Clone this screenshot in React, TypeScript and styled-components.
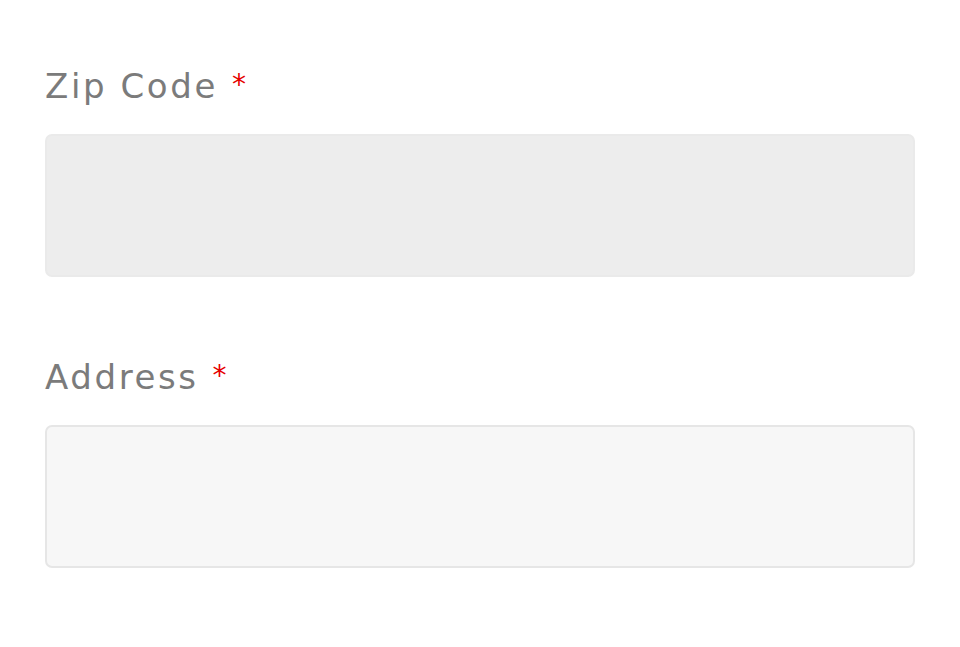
import React from 'react';
import styled, { createGlobalStyle } from 'styled-components';

const GlobalStyle = createGlobalStyle`
  html, body {
    margin: 0;
    padding: 0;
    background: #ffffff;
  }
  body {
    font-family: 'DejaVu Sans', 'Liberation Sans', sans-serif;
  }
`;

const Form = styled.form`
  display: flex;
  flex-direction: column;
  gap: 80px;
  padding: 66px 45px 0 45px;
`;

const Field = styled.div`
  display: flex;
  flex-direction: column;
  gap: 28px;
`;

const Label = styled.label`
  display: block;
  font-family: 'DejaVu Sans', 'Liberation Sans', sans-serif;
  font-size: 34px;
  line-height: 40px;
  font-weight: 400;
  color: #7b7b7b;
  letter-spacing: 2.6px;
`;

// asterisk sits a little above the baseline
const Required = styled.span`
  position: relative;
  top: -4px;
  color: #e60000;
  font-size: 28px;
  line-height: 0;
  margin-left: 14px;
  letter-spacing: 0;
`;

const Input = styled.input<{ $filled?: boolean }>`
  display: block;
  box-sizing: border-box;
  width: 100%;
  height: 143px;
  margin: 0;
  border-radius: 7px;
  border: 2px solid ${(p) => (p.$filled ? '#eaeaea' : '#e6e6e6')};
  background: ${(p) => (p.$filled ? '#ededed' : '#f7f7f7')};
  outline: none;
  font-size: 28px;
  padding: 0 20px;
`;

export default function App() {
  return (
    <>
      <GlobalStyle />
      <Form onSubmit={(e) => e.preventDefault()}>
        <Field>
          <Label htmlFor="zip">
            Zip Code<Required>*</Required>
          </Label>
          <Input id="zip" $filled />
        </Field>
        <Field>
          <Label htmlFor="address">
            Address<Required>*</Required>
          </Label>
          <Input id="address" />
        </Field>
      </Form>
    </>
  );
}
